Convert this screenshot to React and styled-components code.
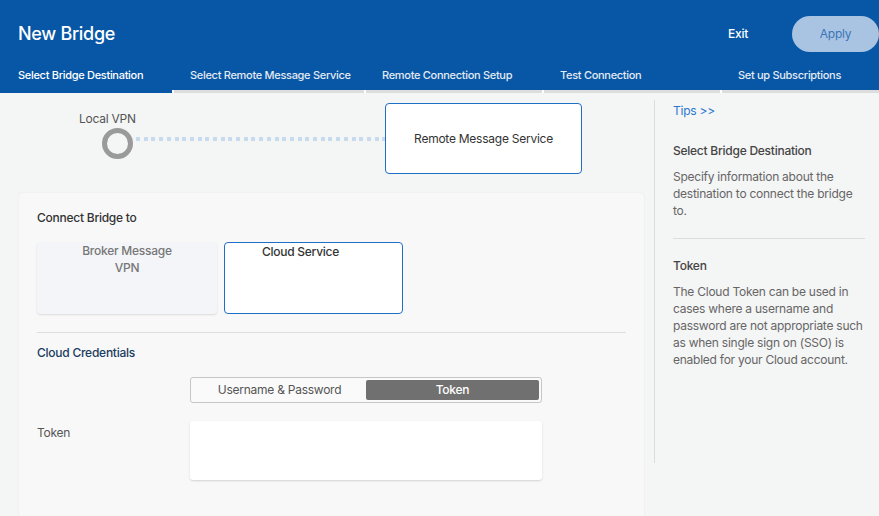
import React from "react";
import styled, { createGlobalStyle } from "styled-components";

const Global = createGlobalStyle`
  html, body { margin: 0; padding: 0; }
  body {
    background: #f4f5f5;
    font-family: Inter, "Noto Sans", "Liberation Sans", sans-serif;
    font-size: 12px;
    letter-spacing: -0.25px;
    color: #444;
    overflow: hidden;
  }
  * { box-sizing: border-box; }
`;

const Page = styled.div`
  width: 879px;
  height: 516px;
  display: flex;
  flex-direction: column;
  overflow: hidden;
`;

const Header = styled.header`
  background: #0757a6;
  color: #fff;
`;

const HeaderTop = styled.div`
  height: 66px;
  display: flex;
  align-items: center;
  padding-left: 18px;
`;

const Title = styled.h1`
  margin: 0;
  font-size: 18px;
  font-weight: 500;
  letter-spacing: -0.3px;
`;

const ExitButton = styled.button`
  margin-left: auto;
  margin-right: 44px;
  background: none;
  border: none;
  color: #fff;
  font: inherit;
  font-size: 12px;
  font-weight: 500;
  letter-spacing: -0.25px;
  padding: 0;
`;

const ApplyButton = styled.button`
  width: 87px;
  height: 36px;
  margin-top: 1px;
  border: none;
  border-radius: 18px;
  background: #a9c4e3;
  color: #3c74b6;
  font: inherit;
  font-size: 12px;
  letter-spacing: -0.25px;
  padding: 0;
`;

const Tabs = styled.nav`
  display: flex;
  background: linear-gradient(to bottom, #0757a6 calc(100% - 3px), #ffffff calc(100% - 3px));
`;

const Tab = styled.div`
  width: ${(p) => p.$w}px;
  display: flex;
  flex-direction: column;
`;

const TabLabel = styled.div`
  height: 24px;
  line-height: 18px;
  padding-left: ${(p) => p.$pad}px;
  font-size: 11px;
  font-weight: 500;
  letter-spacing: -0.3px;
  white-space: nowrap;
  color: ${(p) => (p.$active ? "#ffffff" : "#e4eaf2")};
`;

const TabSeg = styled.div`
  height: 3px;
  margin-right: ${(p) => (p.$last ? 0 : 2)}px;
  background: ${(p) => (p.$active ? "#0757a6" : "#dddddd")};
`;

const Body = styled.div`
  flex: 1;
  display: flex;
  min-height: 0;
`;

const Main = styled.main`
  width: 654px;
  padding: 0 10px 0 19px;
  display: flex;
  flex-direction: column;
`;

const Diagram = styled.div`
  margin-top: 10px;
  width: 563px;
  height: 71px;
  padding-left: 60px;
  display: flex;
  align-items: flex-start;
`;

const LocalNode = styled.div`
  margin-top: 9px;
  display: flex;
  flex-direction: column;
`;

const NodeLabel = styled.div`
  line-height: 14px;
  color: #555;
  white-space: nowrap;
`;

const Ring = styled.div`
  margin: 2px 0 0 23px;
  width: 31px;
  height: 31px;
  border-radius: 50%;
  border: 5px solid #9a9a9a;
`;

const DotLine = styled.div`
  flex: 1;
  height: 4px;
  margin-top: 34px;
  background: repeating-linear-gradient(
    to right,
    #c7daee 0 4px,
    transparent 4px 7.7px
  );
`;

const RemoteBox = styled.div`
  width: 197px;
  height: 71px;
  border: 1px solid #1f6fc5;
  border-radius: 4px;
  background: #fff;
  display: flex;
  align-items: center;
  justify-content: center;
  color: #333;
  font-size: 12px;
`;

const Card = styled.section`
  margin-top: 19px;
  flex: 1;
  background: #f8f8f8;
  border-radius: 4px 4px 0 0;
  box-shadow: 0 0 2px rgba(0, 0, 0, 0.07);
  padding: 18px 18px 0 18px;
  display: flex;
  flex-direction: column;
`;

const SectionTitle = styled.h2`
  margin: ${(p) => p.$mt || 0}px 0 0 0;
  font-size: 12px;
  font-weight: 500;
  line-height: 14px;
  color: ${(p) => p.$color || "#333"};
`;

const TileRow = styled.div`
  margin-top: 17px;
  display: flex;
  gap: 7px;
`;

const Tile = styled.div`
  width: ${(p) => p.$w}px;
  height: 72px;
  border-radius: 4px;
  padding: 0 ${(p) => (p.$selected ? 26 : 0)}px 0 0;
  line-height: 17px;
  font-size: 12px;
  text-align: center;
  ${(p) =>
    p.$selected
      ? `background: #fff; border: 1px solid #1f6fc5; color: #333; font-weight: 500;`
      : `background: #f3f5f8; box-shadow: 0 1px 2px rgba(0,0,0,0.12); color: #777; font-weight: 500;`}
`;

const Divider = styled.hr`
  margin: 18px 0 0 0;
  border: none;
  border-top: 1px solid #dedede;
  width: 100%;
`;

const FormRow = styled.div`
  margin-top: ${(p) => p.$mt}px;
  display: grid;
  grid-template-columns: 153px 352px;
`;

const FieldLabel = styled.div`
  padding-top: 5px;
  line-height: 14px;
  color: #555;
`;

const Toggle = styled.div`
  height: 26px;
  border: 1px solid #c6c6c6;
  border-radius: 3px;
  padding: 2px;
  display: grid;
  grid-template-columns: 1fr 1fr;
  background: #fafafa;
`;

const ToggleOption = styled.div`
  display: flex;
  align-items: center;
  justify-content: center;
  padding-bottom: 1px;
  border-radius: 2px;
  font-size: 12px;
  background: ${(p) => (p.$active ? "#707070" : "transparent")};
  color: ${(p) => (p.$active ? "#fff" : "#555")};
  font-weight: ${(p) => (p.$active ? 500 : 400)};
`;

const TokenInput = styled.div`
  height: 59px;
  background: #fff;
  border-radius: 3px;
  box-shadow: 0 1px 2px rgba(0, 0, 0, 0.15);
`;

const Tips = styled.aside`
  margin-top: 7px;
  height: 363px;
  width: 225px;
  border-left: 1px solid #dcdcdc;
  padding: 4px 14px 0 18px;
`;

const TipsLink = styled.a`
  display: block;
  line-height: 14px;
  color: #2a78d0;
  font-size: 12px;
  text-decoration: none;
`;

const TipTitle = styled.h3`
  margin: ${(p) => p.$mt}px 0 0 0;
  font-size: 12px;
  font-weight: 500;
  line-height: 14px;
  color: #444;
`;

const TipText = styled.p`
  margin: 10px 0 0 0;
  line-height: 17px;
  font-size: 12px;
  color: #666;
`;

const TipDivider = styled.hr`
  margin: 19px 0 0 0;
  border: none;
  border-top: 1px solid #dcdcdc;
`;

const steps = [
  { label: "Select Bridge Destination", w: 174, pad: 18, active: true },
  { label: "Select Remote Message Service", w: 192, pad: 16 },
  { label: "Remote Connection Setup", w: 178, pad: 16 },
  { label: "Test Connection", w: 178, pad: 16 },
  { label: "Set up Subscriptions", w: 157, pad: 16, last: true },
];

export default function App() {
  return (
    <Page>
      <Global />
      <Header>
        <HeaderTop>
          <Title>New Bridge</Title>
          <ExitButton>Exit</ExitButton>
          <ApplyButton>Apply</ApplyButton>
        </HeaderTop>
        <Tabs>
          {steps.map((s) => (
            <Tab key={s.label} $w={s.w}>
              <TabLabel $pad={s.pad} $active={s.active}>
                {s.label}
              </TabLabel>
              <TabSeg $active={s.active} $last={s.last} />
            </Tab>
          ))}
        </Tabs>
      </Header>
      <Body>
        <Main>
          <Diagram>
            <LocalNode>
              <NodeLabel>Local VPN</NodeLabel>
              <Ring />
            </LocalNode>
            <DotLine />
            <RemoteBox>Remote Message Service</RemoteBox>
          </Diagram>
          <Card>
            <SectionTitle>Connect Bridge to</SectionTitle>
            <TileRow>
              <Tile $w={180}>
                Broker Message
                <br />
                VPN
              </Tile>
              <Tile $w={179} $selected>
                Cloud Service
              </Tile>
            </TileRow>
            <Divider />
            <SectionTitle $mt={13} $color="#1b3c61">
              Cloud Credentials
            </SectionTitle>
            <FormRow $mt={17}>
              <div />
              <Toggle>
                <ToggleOption>Username &amp; Password</ToggleOption>
                <ToggleOption $active>Token</ToggleOption>
              </Toggle>
            </FormRow>
            <FormRow $mt={18}>
              <FieldLabel>Token</FieldLabel>
              <TokenInput />
            </FormRow>
          </Card>
        </Main>
        <Tips>
          <TipsLink href="#">Tips &gt;&gt;</TipsLink>
          <TipTitle $mt={26}>Select Bridge Destination</TipTitle>
          <TipText>
            Specify information about the destination to connect the bridge to.
          </TipText>
          <TipDivider />
          <TipTitle $mt={20}>Token</TipTitle>
          <TipText>
            The Cloud Token can be used in cases where a username and password
            are not appropriate such as when single sign on (SSO) is enabled for
            your Cloud account.
          </TipText>
        </Tips>
      </Body>
    </Page>
  );
}
